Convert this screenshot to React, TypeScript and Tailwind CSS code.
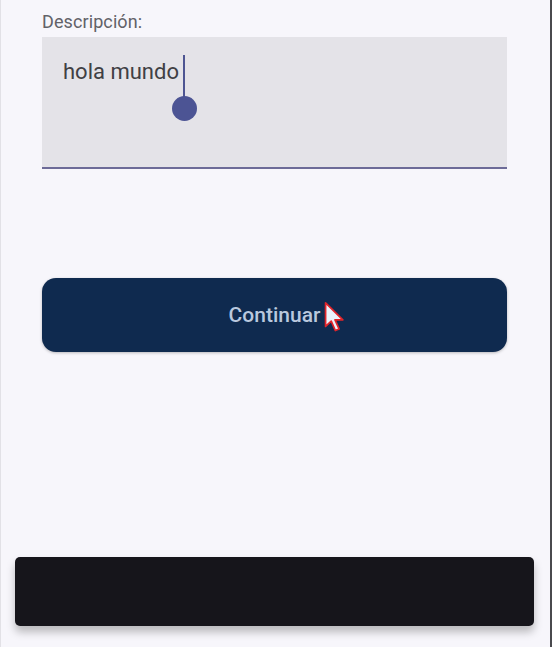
import React from "react";

export default function App() {
  return (
    <div
      className="relative flex h-[647px] w-[552px] flex-col overflow-hidden border-l border-r-2 border-l-[#e2e1e6] border-r-[#4a4a4e] bg-[#f7f6fb]"
      style={{ fontFamily: "Roboto, 'Noto Sans', sans-serif" }}
    >
      <div className="flex flex-col px-[41px] pt-[11px]">
        <div className="text-[18px] leading-[22px] tracking-[0.1px] text-[#626268]">Descripción:</div>
        <div className="relative mt-[4px] h-[132px] w-[465px] border-b-2 border-[#6d6b98] bg-[#e4e3e8] pl-[21px] pt-[21px]">
          <div className="text-[22px] leading-[28px] text-[#404044]">hola mundo</div>
          <div className="absolute left-[141px] top-[18px] h-[50px] w-[2px] bg-[#4e5592]" />
          <div className="absolute left-[130px] top-[59px] h-[25px] w-[25px] rounded-full bg-[#4c5494]" />
        </div>
        <div className="mt-[109px] flex h-[74px] w-[465px] items-center justify-center rounded-[14px] bg-[#0f2a4f] shadow-[0_1px_3px_rgba(0,0,0,0.25)]">
          <span className="pt-[1px] text-[21px] font-medium text-[#b9c8de]">Continuar</span>
        </div>
      </div>
      <div className="ml-[14px] mt-[205px] h-[69px] w-[519px] rounded-[5px] bg-[#16151b] shadow-[0_6px_8px_rgba(0,0,0,0.25)]" />
      <svg
        className="absolute left-[323px] top-[301px]"
        width="22"
        height="32"
        viewBox="0 0 14 20"
      >
        <path
          d="M1 1 L1 16 L4.6 12.6 L7.2 18.6 L9.6 17.6 L7 11.8 L12 11.8 Z"
          fill="#eaf2fb"
          stroke="#e0242a"
          strokeWidth="1.1"
          strokeLinejoin="round"
        />
      </svg>
    </div>
  );
}
